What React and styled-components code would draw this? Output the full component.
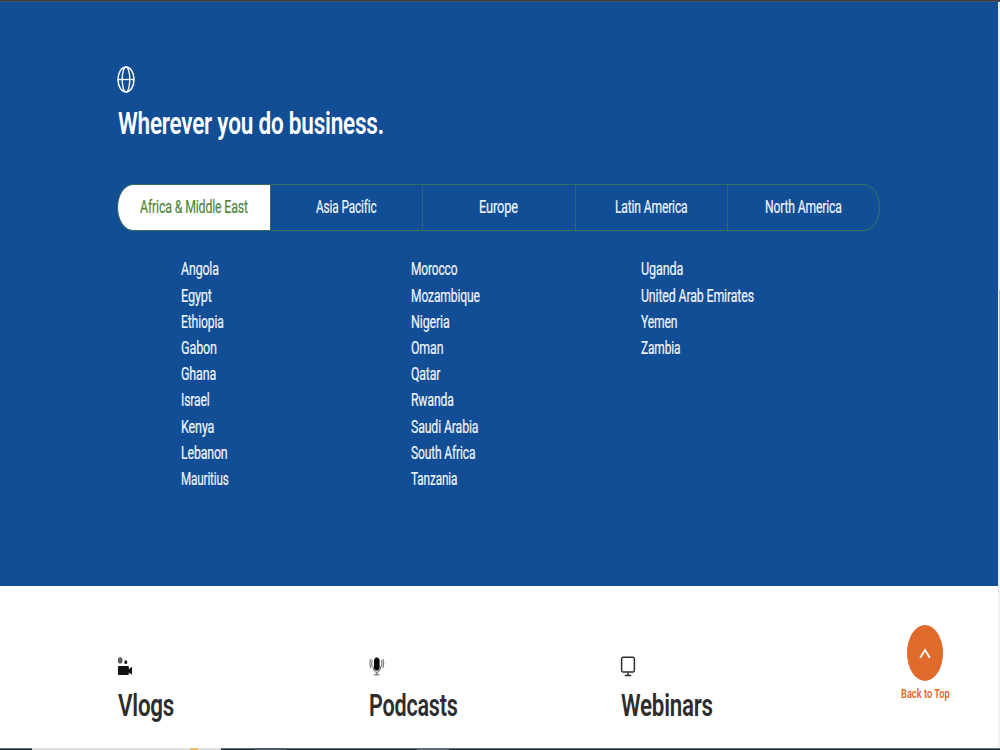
import React, { useLayoutEffect, useRef, useState } from "react";
import styled, { createGlobalStyle } from "styled-components";

const Global = createGlobalStyle`
  * { box-sizing: border-box; }
  body { margin: 0; background: #fff; overflow: hidden; }
  button { font: inherit; color: inherit; background: none; border: 0; padding: 0; }
`;

const Page = styled.div`
  display: flex;
  width: 1000px;
  height: 750px;
  flex-direction: column;
  overflow: hidden;
  font-family: Roboto, "Open Sans", sans-serif;
`;
const TopEdge = styled.div`
  height: 2px;
  flex: none;
  background: #3b3b3d;
  border-bottom: 1px solid #44556f;
`;
const Body = styled.div`
  display: flex;
  height: 746px;
  flex: none;
`;
const Main = styled.main`
  width: 998px;
`;
const ScrollTrack = styled.div`
  width: 2px;
  padding-top: 288px;
  background: #f1f1f1;
`;
const ScrollThumb = styled.div`
  height: 150px;
  margin-left: 1px;
  background: #bdbdbd;
`;
const Regions = styled.section`
  height: 584px;
  padding: 64px 118px 0 117px;
  background: #124e96;
  color: #fff;
`;
const GlobeIcon = styled.svg`
  display: block;
  width: 18px;
  height: 27px;
`;
const Title = styled.h2`
  margin: 13px 0 0 0.5px;
  height: 36px;
  font-size: 31px;
  font-weight: 600;
  line-height: 36px;
  letter-spacing: -0.3px;
`;
const Tabs = styled.div`
  display: flex;
  width: 763px;
  height: 47px;
  margin-top: 42px;
  border: 1px solid #356f62;
  border-bottom-color: #3c7556;
  border-radius: 16px / 23.5px;
  overflow: hidden;
`;
const Tab = styled.button`
  flex: 1 1 0;
  display: flex;
  align-items: center;
  justify-content: center;
  font-size: 17.8px;
  line-height: 24px;
  letter-spacing: -0.2px;
  -webkit-text-stroke: 0.2px currentColor;
  padding-bottom: 1px;
  color: ${(p) => (p.$active ? "#4f8638" : "#f0f5fc")};
  background: ${(p) => (p.$active ? "#fff" : "transparent")};
  &:first-child { flex: 0 0 152px; }
  & + & { border-left: 1px solid #2d6670; }
`;
const Countries = styled.div`
  display: grid;
  grid-template-columns: repeat(3, 230px);
  padding: 25.4px 0 0 64px;
`;
const List = styled.ul`
  list-style: none;
  margin: 0;
  padding: 0;
`;
const Country = styled.li`
  height: 26.2px;
  line-height: 26.2px;
  font-size: 17.5px;
  letter-spacing: -0.2px;
  -webkit-text-stroke: 0.2px currentColor;
  color: #f0f5fc;
`;
const Media = styled.section`
  display: flex;
  height: 162px;
  padding: 70px 0 0 117px;
  color: #2d2d2d;
`;
const MediaItem = styled.div`
  width: 251.7px;
`;
const MediaIcon = styled.svg`
  display: block;
  width: 16px;
  height: 22px;
`;
const MediaTitle = styled.h3`
  margin: 10px 0 0 0.5px;
  font-size: 31.5px;
  font-weight: 600;
  line-height: 36px;
  letter-spacing: -0.3px;
`;
const BackToTop = styled.button`
  display: flex;
  flex-direction: column;
  align-items: center;
  width: 50px;
  height: 80px;
  margin: -31.5px 0 0 28px;
  color: #e0692c;
  font-size: 12.3px;
  font-weight: 600;
  line-height: 16px;
`;
const Circle = styled.span`
  display: flex;
  align-items: center;
  justify-content: center;
  flex: none;
  width: 36px;
  height: 56px;
  margin-bottom: 5px;
  border-radius: 50%;
  background: #e0692c;
`;
const Taskbar = styled.div`
  display: flex;
  height: 2px;
  flex: none;
  background: #1d2d3f;
  border-top: 1px solid #64737f;
`;
const TaskSegment = styled.div`
  width: ${(p) => p.$w}px;
  height: 2px;
  margin-top: -1px;
  background: ${(p) => p.$c};
`;
const FitBox = styled.span`
  display: block;
  width: ${(p) => p.$w}px;
  white-space: nowrap;
`;
const FitText = styled.span`
  display: inline-block;
  transform-origin: 0 50%;
`;

/* Condenses a label horizontally so that it fills the given width. */
function Fit({ w, children }) {
  const ref = useRef(null);
  const [scale, setScale] = useState(1);
  useLayoutEffect(() => {
    setScale(w / ref.current.offsetWidth);
  }, [w, children]);
  return (
    <FitBox $w={w}>
      <FitText ref={ref} style={{ transform: `scaleX(${scale})` }}>{children}</FitText>
    </FitBox>
  );
}

const tabs = [
  ["Africa & Middle East", 108],
  ["Asia Pacific", 60.5],
  ["Europe", 39],
  ["Latin America", 72.5],
  ["North America", 77],
];
const columns = [
  [["Angola", 37.5], ["Egypt", 30.5], ["Ethiopia", 43], ["Gabon", 36], ["Ghana", 35], ["Israel", 28.5], ["Kenya", 33], ["Lebanon", 46.5], ["Mauritius", 48]],
  [["Morocco", 46.5], ["Mozambique", 69], ["Nigeria", 38.5], ["Oman", 32.5], ["Qatar", 29.5], ["Rwanda", 42.5], ["Saudi Arabia", 67.5], ["South Africa", 64.5], ["Tanzania", 46.5]],
  [["Uganda", 42.5], ["United Arab Emirates", 113], ["Yemen", 36.5], ["Zambia", 39.5]],
];

export default function App() {
  return (
    <>
      <Global />
      <Page>
        <TopEdge />
        <Body>
          <Main>
            <Regions>
              <GlobeIcon viewBox="0 0 18 27" fill="none" stroke="#f4f8fc" strokeWidth="1.4">
                <ellipse cx="9" cy="13.5" rx="8" ry="12.5" strokeWidth="1.6" />
                <ellipse cx="9" cy="13.5" rx="3.8" ry="12.5" />
                <path d="M1 13.5H17" />
              </GlobeIcon>
              <Title><Fit w={266}>Wherever you do business.</Fit></Title>
              <Tabs>
                {tabs.map(([name, w], i) => (
                  <Tab key={name} $active={i === 0}><Fit w={w}>{name}</Fit></Tab>
                ))}
              </Tabs>
              <Countries>
                {columns.map((col, i) => (
                  <List key={i}>
                    {col.map(([name, w]) => (
                      <Country key={name}><Fit w={w}>{name}</Fit></Country>
                    ))}
                  </List>
                ))}
              </Countries>
            </Regions>
            <Media>
              <MediaItem>
                <MediaIcon viewBox="0 0 16 22" fill="#111">
                  <ellipse cx="3.2" cy="4.4" rx="1.7" ry="2.6" fill="#999" stroke="#444" strokeWidth="1.1" />
                  <ellipse cx="3.2" cy="4.4" rx=".6" ry=".9" />
                  <ellipse cx="8.8" cy="6.2" rx="1.4" ry="1.9" />
                  <rect x="1" y="10" width="10.8" height="9" rx=".7" />
                  <path d="M11 13.8L15 10.8V18.8L11 16Z" />
                </MediaIcon>
                <MediaTitle><Fit w={56}>Vlogs</Fit></MediaTitle>
              </MediaItem>
              <MediaItem>
                <MediaIcon viewBox="0 0 16 22" fill="none" stroke="#555" strokeWidth="1">
                  <rect x="5" y="1.5" width="5.6" height="13" rx="2.8" ry="3.6" fill="#080808" stroke="none" />
                  <path d="M4 10.5C4 18.2 11.6 18.2 11.6 10.5M7.8 16.5V18.6M5 18.8H10.6" />
                  <path d="M3.4 4.2C2.5 6.2 2.5 8.6 3.4 10.6M12.2 4.2C13.1 6.2 13.1 8.6 12.2 10.6M1.8 2.9C.8 5.7 .8 9.2 1.8 12M13.8 2.9C14.8 5.7 14.8 9.2 13.8 12" stroke="#888" strokeWidth="1.3" />
                </MediaIcon>
                <MediaTitle><Fit w={89}>Podcasts</Fit></MediaTitle>
              </MediaItem>
              <MediaItem>
                <MediaIcon viewBox="0 0 16 22" fill="none" stroke="#2d2d2d" strokeWidth="1.5">
                  <rect x="1.6" y="1.3" width="12.8" height="14.6" rx="1.3" ry="1.8" />
                  <path d="M8 16.5V19M4.8 19.5H11.2" />
                </MediaIcon>
                <MediaTitle><Fit w={92}>Webinars</Fit></MediaTitle>
              </MediaItem>
              <BackToTop>
                <Circle>
                  <svg width="12" height="12" viewBox="0 0 12 12" fill="none" stroke="#fff" strokeWidth="1.8">
                    <path d="M1.2 10.8L6 3L10.8 10.8" />
                  </svg>
                </Circle>
                <Fit w={49}>Back to Top</Fit>
              </BackToTop>
            </Media>
          </Main>
          <ScrollTrack><ScrollThumb /></ScrollTrack>
        </Body>
        <Taskbar>
          <TaskSegment $w={32} $c="transparent" />
          <TaskSegment $w={158} $c="#dedede" />
          <TaskSegment $w={8} $c="#e8bd68" />
          <TaskSegment $w={23} $c="#dedede" />
          <TaskSegment $w={33} $c="transparent" />
          <TaskSegment $w={32} $c="#47586a" />
          <TaskSegment $w={131} $c="transparent" />
          <TaskSegment $w={32} $c="#5d6a78" />
        </Taskbar>
      </Page>
    </>
  );
}
